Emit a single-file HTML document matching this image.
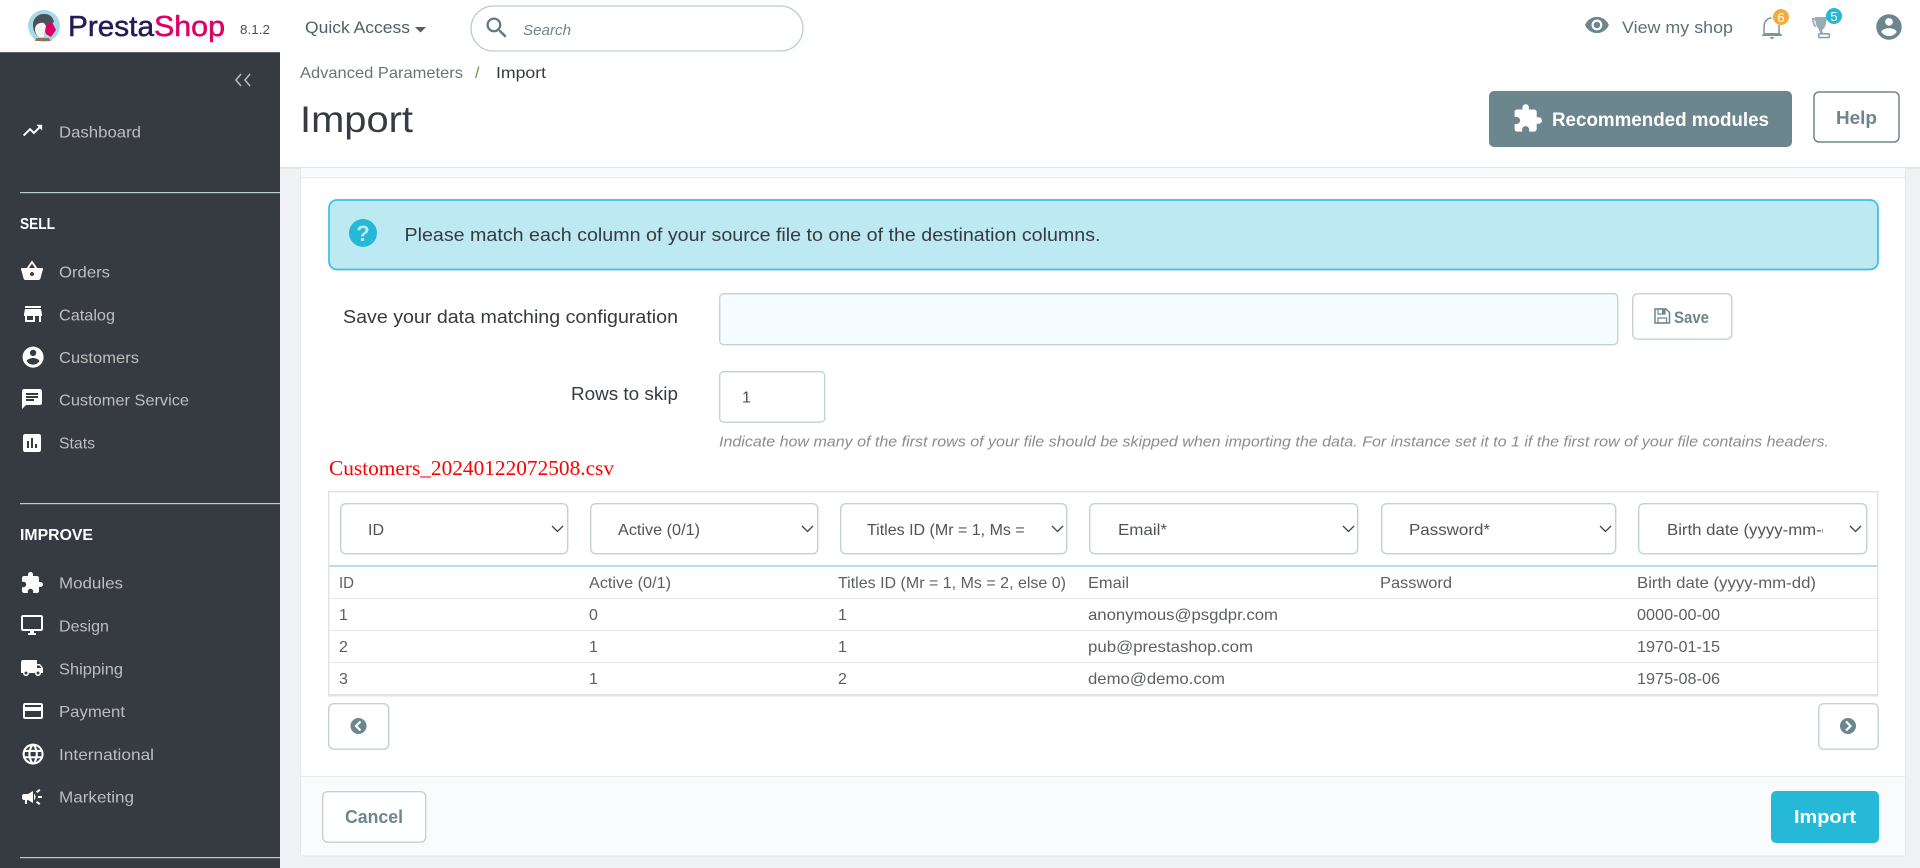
<!DOCTYPE html>
<html lang="en">
<head>
<meta charset="utf-8">
<title>Import</title>
<style>
html,body{margin:0;padding:0;width:1920px;height:868px;overflow:hidden;background:#eff1f2}
svg{display:block}
text{font-family:"Liberation Sans",sans-serif}
.nav{font-size:16px;fill:#bebebe}
.hd{font-size:16px;font-weight:bold;fill:#fff}
.ic{fill:#fff}
.sel{font-size:16px;fill:#4f5358}
.td{font-size:16px;fill:#5c5f63}
.box{fill:#fff;stroke:#c3d2d7;stroke-width:1.4}
.chev{fill:none;stroke:#3f4347;stroke-width:1.3}
.btn{font-size:18px;font-weight:bold;fill:#6c868e}
</style>
</head>
<body>
<svg width="1920" height="868" viewBox="0 0 1920 868" xmlns="http://www.w3.org/2000/svg">
<defs>
<clipPath id="c1"><rect x="860" y="510" width="165" height="40"/></clipPath>
<clipPath id="c2"><rect x="1660" y="510" width="163" height="40"/></clipPath>
</defs>

<rect width="1920" height="868" fill="#eff1f2"/>
<!-- header -->
<rect x="0" y="0" width="1920" height="167" fill="#fff"/>
<rect x="280" y="167" width="1640" height="1.5" fill="#dfe3e4"/>

<!-- logo -->
<circle cx="44" cy="26" r="16" fill="#a5dbe8"/>
<path d="M33 25c0-7 5-11 11-11 6 0 9 3 10 8l-6 3-3 9-6 3c-4-2-6-7-6-12z" fill="#4a5256"/>
<path d="M35 29c0-4 4-7 9-6l2 3-2 11h-5c-3-2-4-5-4-8z" fill="#f4f4f0"/>
<path d="M46 25l6-3 4 8-5 7-5-3z" fill="#df0067"/>
<path d="M36 38h13l2 3H35z" fill="#8a7a5c"/>
<text x="68" y="36" font-size="29" fill="#251b5b" stroke="#251b5b" stroke-width=".5" textLength="86" lengthAdjust="spacingAndGlyphs">Presta</text>
<text x="154" y="36" font-size="29" fill="#df0067" stroke="#df0067" stroke-width=".5" textLength="71" lengthAdjust="spacingAndGlyphs">Shop</text>
<text x="240" y="34" font-size="13" fill="#4a5157" textLength="30" lengthAdjust="spacingAndGlyphs">8.1.2</text>
<text x="305" y="33" font-size="17" fill="#4d6068" textLength="105" lengthAdjust="spacingAndGlyphs">Quick Access</text>
<path d="M415 27h11l-5.500 5.500z" fill="#4d6068"/>
<rect x="471" y="6" width="332" height="45" rx="22.500" fill="#fff" stroke="#bbcdd2" stroke-width="1.300"/>
<path transform="translate(483 14) scale(1.15)" d="M15.500 14h-.79l-.28-.27C15.410 12.590 16 11.110 16 9.500 16 5.910 13.090 3 9.500 3S3 5.910 3 9.500 5.910 16 9.500 16c1.610 0 3.090-.59 4.230-1.570l.27.28v.79l5 4.990L20.490 19l-4.990-5zm-6 0C7.010 14 5 11.990 5 9.500S7.010 5 9.500 5 14 7.010 14 9.500 11.990 14 9.500 14z" fill="#5f7a82"/>
<text x="523" y="35" font-size="15" font-style="italic" fill="#6c868e" textLength="48" lengthAdjust="spacingAndGlyphs">Search</text>

<!-- right header -->
<path transform="translate(1584 12) scale(1.08)" d="M12 4.500C7 4.500 2.730 7.610 1 12c1.730 4.390 6 7.500 11 7.500s9.270-3.110 11-7.500c-1.730-4.390-6-7.500-11-7.500zM12 17c-2.760 0-5-2.240-5-5s2.240-5 5-5 5 2.240 5 5-2.240 5-5 5zm0-8c-1.660 0-3 1.340-3 3s1.340 3 3 3 3-1.340 3-3-1.340-3-3-3z" fill="#6c868e"/>
<text x="1622" y="33" font-size="17" fill="#5c7078" textLength="111" lengthAdjust="spacingAndGlyphs">View my shop</text>
<path d="M1764 33v-6c0-5 3-9 7.500-9" fill="none" stroke="#7d949b" stroke-width="1.500"/>
<path d="M1762 35l2-2h16l2 2v1h-20z" fill="#7d949b"/>
<path d="M1769.500 37h5l-2.500 2.500z" fill="#7d949b"/>
<path d="M1779 25v8" fill="none" stroke="#7d949b" stroke-width="1.500"/>
<circle cx="1781" cy="17" r="8" fill="#f4ac3d"/>
<text x="1781" y="22" font-size="13" fill="#fff" text-anchor="middle">6</text>
<path d="M1812 18h4l-.5 2.500h-1.500c.3 2.500 1.200 4.500 2.500 5.500l-1 1.500c-2.500-1.500-3.500-5-3.500-9.500z" fill="#a3b3b8"/>
<path d="M1815 17h12l-1 6c-.5 3.500-2 6-4 7l1 3h-3l-1.500-4.500c-2-1.500-3-5-3.500-11.500z" fill="#9aabb1"/>
<rect x="1818.800" y="33.800" width="10.500" height="3.800" rx=".8" fill="none" stroke="#8ea1a8" stroke-width="1.600"/>
<circle cx="1834" cy="16" r="8" fill="#25b9d7"/>
<text x="1834" y="21" font-size="13" fill="#fff" text-anchor="middle">5</text>
<path transform="translate(1873.750 11.750) scale(1.27)" d="M12 2C6.480 2 2 6.480 2 12s4.480 10 10 10 10-4.480 10-10S17.520 2 12 2zm0 3c1.660 0 3 1.340 3 3s-1.340 3-3 3-3-1.340-3-3 1.340-3 3-3zm0 14.200c-2.500 0-4.710-1.280-6-3.220.03-1.990 4-3.080 6-3.080 1.990 0 5.970 1.090 6 3.080-1.290 1.940-3.500 3.220-6 3.220z" fill="#6c868e"/>

<!-- breadcrumb/title -->
<text x="300" y="78" font-size="16" fill="#6c7378" textLength="163" lengthAdjust="spacingAndGlyphs">Advanced Parameters</text>
<text x="475" y="78" font-size="16" fill="#5f9e2f">/</text>
<text x="496" y="78" font-size="16" fill="#363a41" textLength="50" lengthAdjust="spacingAndGlyphs">Import</text>
<text x="300" y="132" font-size="37" fill="#363a41" textLength="113" lengthAdjust="spacingAndGlyphs">Import</text>
<rect x="1489" y="91" width="303" height="56" rx="5" fill="#6c868e"/>
<path transform="translate(1512 103) scale(1.3)" d="M20.500 11H19V7c0-1.100-.9-2-2-2h-4V3.500C13 2.120 11.880 1 10.500 1S8 2.120 8 3.500V5H4c-1.100 0-1.990.9-1.990 2v3.800H3.500c1.490 0 2.700 1.210 2.700 2.700s-1.210 2.700-2.700 2.700H2V20c0 1.100.9 2 2 2h3.800v-1.500c0-1.490 1.210-2.700 2.700-2.700 1.490 0 2.700 1.210 2.700 2.700V22H17c1.100 0 2-.9 2-2v-4h1.500c1.380 0 2.500-1.120 2.500-2.500S21.880 11 20.500 11z" fill="#fff"/>
<text x="1552" y="126" font-size="19" font-weight="bold" fill="#fff" textLength="217" lengthAdjust="spacingAndGlyphs">Recommended modules</text>
<rect x="1814" y="92" width="85" height="50" rx="5" fill="#fff" stroke="#6c868e" stroke-width="1.500"/>
<text x="1836" y="124" class="btn" textLength="41" lengthAdjust="spacingAndGlyphs">Help</text>

<!-- sidebar -->
<rect x="0" y="53" width="280" height="815" fill="#363a41"/>
<rect x="0" y="52" width="280" height="1" fill="#5d6168"/>
<path d="M241 74l-5 6 5 6M250 74l-5 6 5 6" fill="none" stroke="#bebebe" stroke-width="1.500"/>
<path class="ic" transform="translate(21 119) scale(.96)" d="M16 6l2.290 2.290-4.880 4.880-4-4L2 16.590 3.410 18l6-6 4 4 6.300-6.290L22 12V6z"/>
<text class="nav" x="59" y="137.500" textLength="82" lengthAdjust="spacingAndGlyphs">Dashboard</text>

<rect x="20" y="192" width="260" height="1.200" fill="#bbcdd2"/>
<text class="hd" x="20" y="229" textLength="35" lengthAdjust="spacingAndGlyphs">SELL</text>
<path class="ic" transform="translate(20 259)" d="M17.210 9l-4.380-6.560c-.19-.28-.51-.42-.83-.42-.32 0-.64.14-.83.43L6.790 9H2c-.55 0-1 .45-1 1 0 .09.01.18.04.27l2.540 9.270c.23.84 1 1.460 1.920 1.460h13c.92 0 1.690-.62 1.930-1.460l2.540-9.270L23 10c0-.55-.45-1-1-1h-4.790zM9 9l3-4.400L15 9H9zm3 8c-1.100 0-2-.9-2-2s.9-2 2-2 2 .9 2 2-.9 2-2 2z"/>
<text class="nav" x="59" y="277.500" textLength="51" lengthAdjust="spacingAndGlyphs">Orders</text>
<path class="ic" transform="translate(21 302)" d="M20 4H4v2h16V4zm1 10v-2l-1-5H4l-1 5v2h1v6h10v-6h4v6h2v-6h1zm-9 4H6v-4h6v4z"/>
<text class="nav" x="59" y="320.500" textLength="56" lengthAdjust="spacingAndGlyphs">Catalog</text>
<path class="ic" transform="translate(20.500 344.500) scale(1.05)" d="M12 2C6.480 2 2 6.480 2 12s4.480 10 10 10 10-4.480 10-10S17.520 2 12 2zm0 3c1.660 0 3 1.340 3 3s-1.340 3-3 3-3-1.340-3-3 1.340-3 3-3zm0 14.200c-2.500 0-4.710-1.280-6-3.220.03-1.990 4-3.080 6-3.080 1.990 0 5.970 1.090 6 3.080-1.290 1.940-3.500 3.220-6 3.220z"/>
<text class="nav" x="59" y="363" textLength="80" lengthAdjust="spacingAndGlyphs">Customers</text>
<path class="ic" transform="translate(20 387)" d="M20 2H4c-1.100 0-1.990.9-1.990 2L2 22l4-4h14c1.100 0 2-.9 2-2V4c0-1.100-.9-2-2-2zM6 9h12v2H6V9zm8 5H6v-2h8v2zm4-6H6V6h12v2z"/>
<text class="nav" x="59" y="405.500" textLength="130" lengthAdjust="spacingAndGlyphs">Customer Service</text>
<path class="ic" transform="translate(20 431)" d="M19 3H5c-1.100 0-2 .9-2 2v14c0 1.100.9 2 2 2h14c1.100 0 2-.9 2-2V5c0-1.100-.9-2-2-2zM9 17H7v-7h2v7zm4 0h-2V7h2v10zm4 0h-2v-4h2v4z"/>
<text class="nav" x="59" y="448.500" textLength="36" lengthAdjust="spacingAndGlyphs">Stats</text>

<rect x="20" y="503" width="260" height="1.200" fill="#bbcdd2"/>
<text class="hd" x="20" y="540" textLength="73" lengthAdjust="spacingAndGlyphs">IMPROVE</text>
<path class="ic" transform="translate(20 571)" d="M20.500 11H19V7c0-1.100-.9-2-2-2h-4V3.500C13 2.120 11.880 1 10.500 1S8 2.120 8 3.500V5H4c-1.100 0-1.990.9-1.990 2v3.800H3.500c1.490 0 2.700 1.210 2.700 2.700s-1.210 2.700-2.700 2.700H2V20c0 1.100.9 2 2 2h3.800v-1.500c0-1.490 1.210-2.700 2.700-2.700 1.490 0 2.700 1.210 2.700 2.700V22H17c1.100 0 2-.9 2-2v-4h1.500c1.380 0 2.500-1.120 2.500-2.500S21.880 11 20.500 11z"/>
<text class="nav" x="59" y="588.500" textLength="64" lengthAdjust="spacingAndGlyphs">Modules</text>
<path class="ic" transform="translate(20 613)" d="M21 2H3c-1.100 0-2 .9-2 2v12c0 1.100.9 2 2 2h7v2H8v2h8v-2h-2v-2h7c1.100 0 2-.9 2-2V4c0-1.100-.9-2-2-2zm0 14H3V4h18v12z"/>
<text class="nav" x="59" y="631.500" textLength="50" lengthAdjust="spacingAndGlyphs">Design</text>
<path class="ic" transform="translate(20 656)" d="M20 8h-3V4H3c-1.100 0-2 .9-2 2v11h2c0 1.660 1.340 3 3 3s3-1.340 3-3h6c0 1.660 1.340 3 3 3s3-1.340 3-3h2v-5l-3-4zM6 18.500c-.83 0-1.500-.67-1.500-1.500s.67-1.500 1.500-1.500 1.500.67 1.500 1.500-.67 1.500-1.500 1.500zm13.500-9l1.960 2.500H17V9.500h2.500zm-1.500 9c-.83 0-1.500-.67-1.500-1.500s.67-1.500 1.500-1.500 1.500.67 1.500 1.500-.67 1.500-1.500 1.500z"/>
<text class="nav" x="59" y="674.500" textLength="64" lengthAdjust="spacingAndGlyphs">Shipping</text>
<path class="ic" transform="translate(21 699)" d="M20 4H4c-1.110 0-1.990.89-1.990 2L2 18c0 1.110.89 2 2 2h16c1.110 0 2-.89 2-2V6c0-1.110-.89-2-2-2zm0 14H4v-6h16v6zm0-10H4V6h16v2z"/>
<text class="nav" x="59" y="717" textLength="66" lengthAdjust="spacingAndGlyphs">Payment</text>
<path class="ic" transform="translate(20.500 741.500) scale(1.05)" d="M11.990 2C6.470 2 2 6.480 2 12s4.470 10 9.990 10C17.520 22 22 17.520 22 12S17.520 2 11.990 2zm6.930 6h-2.950c-.32-1.250-.78-2.450-1.380-3.560 1.840.63 3.370 1.910 4.330 3.560zM12 4.040c.83 1.200 1.480 2.530 1.910 3.960h-3.820c.43-1.430 1.080-2.760 1.910-3.960zM4.260 14C4.100 13.360 4 12.690 4 12s.1-1.360.26-2h3.380c-.08.66-.14 1.320-.14 2 0 .68.06 1.340.14 2H4.260zm.82 2h2.950c.32 1.250.78 2.450 1.380 3.560-1.840-.63-3.370-1.900-4.330-3.560zm2.950-8H5.080c.96-1.660 2.490-2.930 4.330-3.560C8.810 5.550 8.350 6.750 8.030 8zM12 19.960c-.83-1.200-1.480-2.530-1.910-3.960h3.820c-.43 1.430-1.080 2.760-1.910 3.960zM14.340 14H9.660c-.09-.66-.16-1.320-.16-2 0-.68.07-1.350.16-2h4.680c.09.65.16 1.320.16 2 0 .68-.07 1.340-.16 2zm.25 5.560c.6-1.110 1.060-2.310 1.380-3.560h2.950c-.96 1.650-2.490 2.930-4.330 3.560zM16.360 14c.08-.66.14-1.320.14-2 0-.68-.06-1.340-.14-2h3.380c.16.64.26 1.310.26 2s-.1 1.360-.26 2h-3.380z"/>
<text class="nav" x="59" y="760" textLength="95" lengthAdjust="spacingAndGlyphs">International</text>
<path class="ic" transform="translate(20 785)" d="M18 11v2h4v-2h-4zm-2 6.610c.96.71 2.210 1.650 3.200 2.390.4-.53.8-1.070 1.200-1.600-.99-.74-2.240-1.680-3.200-2.400-.4.54-.8 1.080-1.200 1.610zM20.400 5.600c-.4-.53-.8-1.070-1.200-1.600-.99.74-2.240 1.680-3.200 2.400.4.53.8 1.070 1.200 1.600.96-.72 2.210-1.650 3.200-2.400zM4 9c-1.100 0-2 .9-2 2v2c0 1.100.9 2 2 2h1v4h2v-4h1l5 3V6L8 9H4zm11.500 3c0-1.330-.58-2.530-1.500-3.350v6.690c.92-.81 1.500-2.010 1.500-3.340z"/>
<text class="nav" x="59" y="802.500" textLength="75" lengthAdjust="spacingAndGlyphs">Marketing</text>
<rect x="20" y="857" width="260" height="1.200" fill="#bbcdd2"/>

<!-- card -->
<rect x="300.500" y="168" width="1605" height="688" rx="3" fill="#fff" stroke="#dfe8eb" stroke-width="1"/>
<rect x="301" y="168" width="1604" height="9" fill="#f9fafb"/>
<rect x="301" y="177" width="1604" height="1.200" fill="#e3ebef"/>

<!-- alert -->
<rect x="329" y="200" width="1549" height="69.500" rx="8" fill="#bde9f2" stroke="#3fbedc" stroke-width="1.700"/>
<circle cx="363" cy="233" r="14" fill="#25b9d7"/>
<text x="363" y="241" font-size="22" font-weight="bold" fill="#bde9f2" text-anchor="middle">?</text>
<text x="404.500" y="241" font-size="18" fill="#363a41" textLength="696" lengthAdjust="spacingAndGlyphs">Please match each column of your source file to one of the destination columns.</text>

<!-- form -->
<text x="343" y="323" font-size="18" fill="#363a41" textLength="335" lengthAdjust="spacingAndGlyphs">Save your data matching configuration</text>
<rect x="719.700" y="293.700" width="898" height="51" rx="4" fill="#f5fcff" stroke="#c3d2d7" stroke-width="1.400"/>
<rect x="1632.700" y="293.700" width="99" height="45.500" rx="5" class="box"/>
<path d="M1655 309h11l3.500 3.500V323h-14.500z" fill="none" stroke="#6c868e" stroke-width="1.500"/>
<path d="M1658 309h7v5h-7zM1658 318h8.500v5H1658z" fill="none" stroke="#6c868e" stroke-width="1.200"/>
<rect x="1662" y="309.500" width="2.500" height="4" fill="#6c868e"/>
<text x="1674" y="323" font-size="17" font-weight="bold" fill="#6c868e" textLength="35" lengthAdjust="spacingAndGlyphs">Save</text>

<text x="571" y="400" font-size="18" fill="#363a41" textLength="107" lengthAdjust="spacingAndGlyphs">Rows to skip</text>
<rect x="719.700" y="371.700" width="105" height="50.500" rx="4" class="box"/>
<text x="742" y="402.500" font-size="16" fill="#4f5358">1</text>
<text x="719" y="446.500" font-size="15" font-style="italic" fill="#8c8c8c" textLength="1110" lengthAdjust="spacingAndGlyphs">Indicate how many of the first rows of your file should be skipped when importing the data. For instance set it to 1 if the first row of your file contains headers.</text>
<text x="329" y="475" font-size="21" fill="#ff0000" style="font-family:'Liberation Serif',serif" textLength="285" lengthAdjust="spacingAndGlyphs">Customers_20240122072508.csv</text>

<!-- table -->
<rect x="328.700" y="491.700" width="1549" height="204" fill="#fff" stroke="#dfe3e4" stroke-width="1.400"/>
<rect x="340.700" y="503.700" width="227" height="50" rx="5" class="box"/>
<rect x="590.700" y="503.700" width="227" height="50" rx="5" class="box"/>
<rect x="840.700" y="503.700" width="226" height="50" rx="5" class="box"/>
<rect x="1089.700" y="503.700" width="268" height="50" rx="5" class="box"/>
<rect x="1381.700" y="503.700" width="234" height="50" rx="5" class="box"/>
<rect x="1638.700" y="503.700" width="228" height="50" rx="5" class="box"/>
<path class="chev" d="M552 526l5.500 5.500 5.500-5.500M802 526l5.500 5.500 5.500-5.500M1052 526l5.500 5.500 5.500-5.500M1343 526l5.500 5.500 5.500-5.500M1600 526l5.500 5.500 5.500-5.500M1850 526l5.500 5.500 5.500-5.500"/>
<text class="sel" x="368" y="535" textLength="16" lengthAdjust="spacingAndGlyphs">ID</text>
<text class="sel" x="618" y="535" textLength="82" lengthAdjust="spacingAndGlyphs">Active (0/1)</text>
<g clip-path="url(#c1)"><text class="sel" x="867" y="535" textLength="228" lengthAdjust="spacingAndGlyphs">Titles ID (Mr = 1, Ms = 2, else 0)</text></g>
<text class="sel" x="1118" y="535" textLength="49" lengthAdjust="spacingAndGlyphs">Email*</text>
<text class="sel" x="1409" y="535" textLength="81" lengthAdjust="spacingAndGlyphs">Password*</text>
<g clip-path="url(#c2)"><text class="sel" x="1667" y="535" textLength="179" lengthAdjust="spacingAndGlyphs">Birth date (yyyy-mm-dd)</text></g>

<rect x="329" y="565" width="1548" height="2" fill="#b5dcef"/>
<rect x="329" y="598" width="1548" height="1" fill="#e5e8e9"/>
<rect x="329" y="630" width="1548" height="1" fill="#e5e8e9"/>
<rect x="329" y="662" width="1548" height="1" fill="#e5e8e9"/>
<rect x="329" y="694" width="1548" height="2.500" fill="#dfe3e4"/>

<text class="td" x="339" y="588" textLength="15" lengthAdjust="spacingAndGlyphs">ID</text>
<text class="td" x="589" y="588" textLength="82" lengthAdjust="spacingAndGlyphs">Active (0/1)</text>
<text class="td" x="838" y="588" textLength="228" lengthAdjust="spacingAndGlyphs">Titles ID (Mr = 1, Ms = 2, else 0)</text>
<text class="td" x="1088" y="588" textLength="41" lengthAdjust="spacingAndGlyphs">Email</text>
<text class="td" x="1380" y="588" textLength="72" lengthAdjust="spacingAndGlyphs">Password</text>
<text class="td" x="1637" y="588" textLength="179" lengthAdjust="spacingAndGlyphs">Birth date (yyyy-mm-dd)</text>

<text class="td" x="339" y="620">1</text>
<text class="td" x="589" y="620">0</text>
<text class="td" x="838" y="620">1</text>
<text class="td" x="1088" y="620" textLength="190" lengthAdjust="spacingAndGlyphs">anonymous@psgdpr.com</text>
<text class="td" x="1637" y="620" textLength="83" lengthAdjust="spacingAndGlyphs">0000-00-00</text>

<text class="td" x="339" y="652">2</text>
<text class="td" x="589" y="652">1</text>
<text class="td" x="838" y="652">1</text>
<text class="td" x="1088" y="652" textLength="165" lengthAdjust="spacingAndGlyphs">pub@prestashop.com</text>
<text class="td" x="1637" y="652" textLength="83" lengthAdjust="spacingAndGlyphs">1970-01-15</text>

<text class="td" x="339" y="684">3</text>
<text class="td" x="589" y="684">1</text>
<text class="td" x="838" y="684">2</text>
<text class="td" x="1088" y="684" textLength="137" lengthAdjust="spacingAndGlyphs">demo@demo.com</text>
<text class="td" x="1637" y="684" textLength="83" lengthAdjust="spacingAndGlyphs">1975-08-06</text>

<!-- nav buttons -->
<rect x="328.700" y="703.700" width="60" height="45.500" rx="5" class="box"/>
<circle cx="358.500" cy="726" r="8" fill="#6c868e"/>
<path d="M360.500 721.500l-4.500 4.500 4.500 4.500" fill="none" stroke="#fff" stroke-width="2.200"/>
<rect x="1818.700" y="703.700" width="59.500" height="45.500" rx="5" class="box"/>
<circle cx="1848" cy="726" r="8" fill="#6c868e"/>
<path d="M1846 721.500l4.500 4.500-4.500 4.500" fill="none" stroke="#fff" stroke-width="2.200"/>

<!-- footer -->
<rect x="301" y="776" width="1604" height="79.500" fill="#fafbfc"/>
<rect x="301" y="776" width="1604" height="1" fill="#e8ecee"/>
<rect x="322.700" y="791.700" width="103" height="50.500" rx="5" class="box"/>
<text x="345" y="823" class="btn" textLength="58" lengthAdjust="spacingAndGlyphs">Cancel</text>
<rect x="1771" y="791" width="108" height="52" rx="5" fill="#25b9d7"/>
<text x="1794" y="823" font-size="18" font-weight="bold" fill="#fff" textLength="62" lengthAdjust="spacingAndGlyphs">Import</text>
</svg>
</body>
</html>
